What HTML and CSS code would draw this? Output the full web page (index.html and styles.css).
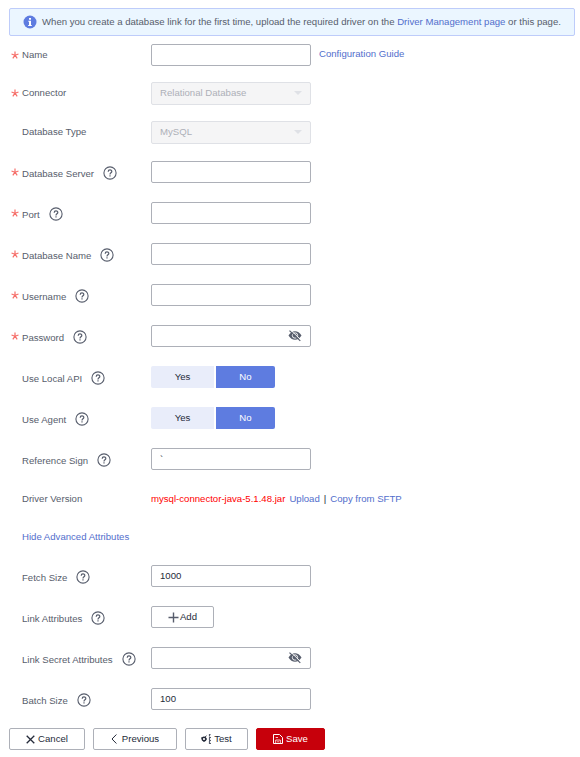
FILE: index.html
```html
<!DOCTYPE html>
<html lang="en">
<head>
<meta charset="utf-8">
<title>Create Link</title>
<link rel="stylesheet" href="styles.css">
</head>
<body>
<svg class="defs" aria-hidden="true">
  <symbol id="star" viewBox="0 0 8 8"><path d="M4 4.2V.4M4 4.2L.5 3M4 4.2L7.5 3M4 4.2L1.8 7.3M4 4.2L6.2 7.3" fill="none" stroke="currentColor" stroke-width="1.2"/></symbol>
  <symbol id="help" viewBox="0 0 14 14"><circle cx="7" cy="7" r="6.1" fill="none" stroke="currentColor" stroke-width="1.1"/><path d="M5.2 5.7C5.2 3.4 8.8 3.4 8.8 5.5C8.8 6.8 7 6.8 7 8.4M7 9.3V10.5" fill="none" stroke="currentColor" stroke-width="1.2"/></symbol>
  <symbol id="eye" viewBox="0 0 14 12"><path d="M.5 5.5C3.7-.2 10.3-.2 13.5 5.5C10.3 11.2 3.7 11.2 .5 5.5Z" fill="currentColor"/><circle cx="7" cy="5.5" r="2.7" fill="none" stroke="#fff" stroke-width=".9"/><path d="M2.6.1L13 10" stroke="#fff" stroke-width="1"/><path d="M1.5.6L12.3 10.9" stroke="currentColor" stroke-width="1.2"/></symbol>
</svg>
<div class="notice">
  <svg class="info" viewBox="0 0 14 14"><circle cx="7" cy="7" r="6.5" fill="#5e7ce0"/><path d="M6 3h2v1.7H6zM5.3 5.8H8V10h.8v1H5.2v-1H6V6.8h-.7z" fill="#fff"/></svg>
  <span class="notice-text">When you create a database link for the first time, upload the required driver on the <a>Driver Management page</a> or this page.</span>
</div>
<main class="form">
  <div class="row name"><div class="label"><svg class="star"><use href="#star"/></svg><span>Name</span></div><div class="input"></div><a class="guide">Configuration Guide</a></div>
  <div class="row connector"><div class="label"><svg class="star"><use href="#star"/></svg><span>Connector</span></div><div class="input select"><span>Relational Database</span><i class="caret"></i></div></div>
  <div class="row type"><div class="label"><span>Database Type</span></div><div class="input select"><span>MySQL</span><i class="caret"></i></div></div>
  <div class="row tall"><div class="label"><svg class="star"><use href="#star"/></svg><span>Database Server</span><svg class="help"><use href="#help"/></svg></div><div class="input"></div></div>
  <div class="row tall"><div class="label"><svg class="star"><use href="#star"/></svg><span>Port</span><svg class="help"><use href="#help"/></svg></div><div class="input"></div></div>
  <div class="row tall"><div class="label"><svg class="star"><use href="#star"/></svg><span>Database Name</span><svg class="help"><use href="#help"/></svg></div><div class="input"></div></div>
  <div class="row tall"><div class="label"><svg class="star"><use href="#star"/></svg><span>Username</span><svg class="help"><use href="#help"/></svg></div><div class="input"></div></div>
  <div class="row tall"><div class="label"><svg class="star"><use href="#star"/></svg><span>Password</span><svg class="help"><use href="#help"/></svg></div><div class="input"><svg class="eye"><use href="#eye"/></svg></div></div>
  <div class="row tall"><div class="label"><span>Use Local API</span><svg class="help"><use href="#help"/></svg></div><div class="toggle"><span class="yes">Yes</span><span class="no">No</span></div></div>
  <div class="row tall"><div class="label"><span>Use Agent</span><svg class="help"><use href="#help"/></svg></div><div class="toggle"><span class="yes">Yes</span><span class="no">No</span></div></div>
  <div class="row tall"><div class="label"><span>Reference Sign</span><svg class="help"><use href="#help"/></svg></div><div class="input"><span>`</span></div></div>
  <div class="row plain"><div class="label"><span>Driver Version</span></div><div class="driver"><span class="jar">mysql-connector-java-5.1.48.jar</span><a>Upload</a><span class="bar">|</span><a>Copy from SFTP</a></div></div>
  <div class="row plain"><div class="label"><a>Hide Advanced Attributes</a></div></div>
  <div class="row tall"><div class="label"><span>Fetch Size</span><svg class="help"><use href="#help"/></svg></div><div class="input"><span>1000</span></div></div>
  <div class="row tall"><div class="label"><span>Link Attributes</span><svg class="help"><use href="#help"/></svg></div><div class="button add"><svg class="plus" viewBox="0 0 11 11"><path d="M5.5.5v10M.5 5.5h10" fill="none" stroke="#575d6c" stroke-width="1.4"/></svg><span>Add</span></div></div>
  <div class="row tall"><div class="label"><span>Link Secret Attributes</span><svg class="help"><use href="#help"/></svg></div><div class="input"><svg class="eye"><use href="#eye"/></svg></div></div>
  <div class="row tall last"><div class="label"><span>Batch Size</span><svg class="help"><use href="#help"/></svg></div><div class="input"><span>100</span></div></div>
</main>
<footer class="actions">
  <div class="button cancel"><svg class="icon9" viewBox="0 0 9 9"><path d="M.7.7l7.6 7.6M8.3.7L.7 8.3" fill="none" stroke="#252b3a" stroke-width="1.3"/></svg><span>Cancel</span></div>
  <div class="button previous"><svg class="chev" viewBox="0 0 6 10"><path d="M5.4.5L1 5l4.4 4.5" fill="none" stroke="#252b3a"/></svg><span>Previous</span></div>
  <div class="button test"><svg class="link" viewBox="0 0 10 10"><circle cx="3" cy="5" r="1.8" fill="none" stroke="#252b3a" stroke-width="1.4"/><path d="M0 4h1.5M4 3.2L5.5 1.8M4.5 5H6M3 7v1" stroke="#252b3a"/><path d="M8 0h2M8 3.5h2M8 6.5h2M8 9.5h2M8.5 0v2.5M8.5 3.5v2.5M8.5 7v3" stroke="#575d6c" stroke-width="1.2"/></svg><span>Test</span></div>
  <div class="button save"><svg class="disk" viewBox="0 0 10 10"><path d="M.5.5h6l3 3v6h-9z" fill="none" stroke="#fff"/><path d="M2.7 9.5V6h4.6v3.5M2.7 3.5H5M4.2 7.8h1.7" fill="none" stroke="#fff" stroke-width=".8"/></svg><span>Save</span></div>
</footer>
</body>
</html>
```
FILE: styles.css
```css
* { box-sizing: border-box; }
body {
  margin: 0;
  padding: 8px 0 0;
  background: #fff;
  color: #575d6c;
  font: 9.6px/12px "Liberation Sans", Arial, sans-serif;
  white-space: nowrap;
}
svg { display: block; flex: none; }
.defs { width: 0; height: 0; position: absolute; }
a { color: #526ecc; }
.notice {
  display: flex;
  align-items: center;
  width: 566px;
  height: 28px;
  margin-left: 9px;
  padding-left: 13px;
  border: 1px solid #beccfa;
  border-radius: 2px;
  background: #ebf6ff;
}
.info { width: 14px; height: 14px; margin-right: 5px; }
.form { padding: 8px 0 0 12px; }
.row { display: grid; grid-template-columns: 139px auto 1fr; align-items: start; }
.name { height: 38px; }
.connector { height: 39px; }
.type { height: 40px; }
.tall { height: 41px; }
.plain { height: 38px; }
.last { height: 40px; }
.label { display: flex; align-items: center; height: 22px; padding-left: 10px; }
.tall .label { height: 25px; }
.plain .label { height: 20px; }
.star { width: 8px; height: 8px; margin-left: -11px; margin-right: 3px; color: #f66f6a; }
.tall .star { margin-bottom: 3px; }
.help { width: 14px; height: 14px; margin: 0 0 1px 9px; }
.input {
  display: flex;
  align-items: center;
  width: 160px;
  height: 22px;
  padding: 0 8px;
  border: 1px solid #adb0b8;
  border-radius: 2px;
  color: #252b3a;
}
.select { height: 23px; padding-bottom: 1px; border-color: #dfe1e6; background: #f5f5f6; color: #adb0b8; justify-content: space-between; }
.caret { border: 4px solid transparent; border-top-color: #dfe1e6; border-bottom: 0; }
.eye { width: 14px; height: 12px; margin-left: auto; color: #575d6c; }
.guide { padding: 4px 0 0 8px; }
.toggle { display: flex; gap: 2px; height: 22px; line-height: 22px; text-align: center; }
.yes { width: 63px; border-radius: 2px 0 0 2px; background: #e9edfa; color: #252b3a; }
.no { width: 59px; border-radius: 0 2px 2px 0; background: #5e7ce0; color: #fff; }
.driver { display: flex; line-height: 20px; }
.jar { color: #f00; margin-right: 4px; }
.bar { margin: 0 4px; color: #252b3a; }
.button {
  display: flex;
  align-items: center;
  justify-content: center;
  height: 22px;
  border: 1px solid #adb0b8;
  border-radius: 2px;
  color: #252b3a;
}
.add { width: 63px; }
.plus { width: 11px; height: 11px; margin-right: 1px; }
.actions { display: flex; padding-left: 9px; }
.cancel { width: 76px; margin-right: 8px; }
.previous { width: 84px; margin-right: 8px; }
.test { width: 63px; margin-right: 8px; }
.save { width: 69px; background: #c7000b; border-color: #c7000b; color: #fff; }
.icon9 { width: 9px; height: 9px; margin-right: 3px; }
.chev { width: 6px; height: 10px; margin-right: 5px; }
.link { width: 10px; height: 10px; margin-right: 3px; }
.disk { width: 10px; height: 10px; margin-right: 3px; }
```
